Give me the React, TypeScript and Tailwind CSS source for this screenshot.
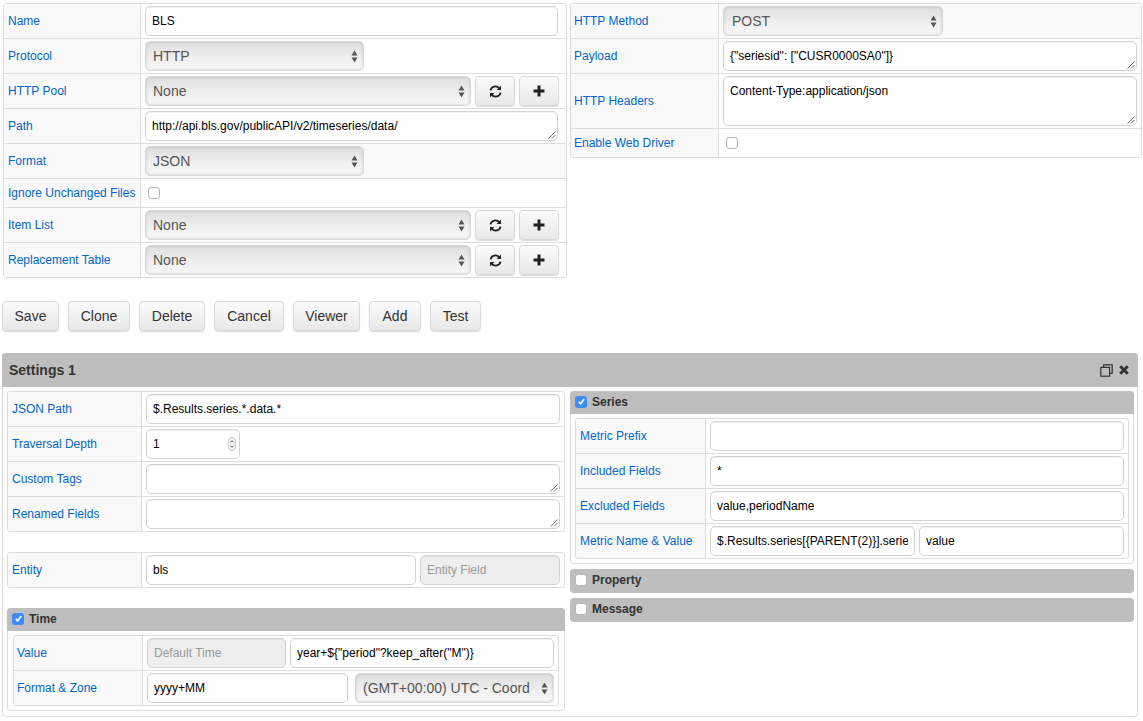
import type { ReactNode } from "react";

const inputCls =
  "h-[30px] min-w-0 rounded-[5px] border border-[#d2d2d2] bg-white px-[6px] text-[12px] text-black shadow-[inset_0_1px_1px_rgba(0,0,0,0.06)] flex items-center whitespace-nowrap";
const disabledCls =
  "h-[30px] min-w-0 rounded-[5px] border border-[#d2d2d2] bg-[#eeeeee] px-[6px] text-[12px] text-[#999999] shadow-[inset_0_1px_1px_rgba(0,0,0,0.06)] flex items-center whitespace-nowrap";
const btnCls =
  "rounded-[4px] border border-[#d8d8d8] bg-[linear-gradient(#fbfbfb,#e8e8e8)] shadow-[0_1px_1px_rgba(0,0,0,0.15)]";
const barCls = "flex items-center gap-[5px] bg-[#bebebe] pl-[5px] text-[12px] font-bold text-[#333333]";

function Grip() {
  return (
    <svg className="absolute bottom-[1px] right-[1px]" width="9" height="9" viewBox="0 0 9 9">
      <path d="M8.5 1.5L1.5 8.5M8.5 5L5 8.5" stroke="#777" strokeWidth="1" fill="none" />
    </svg>
  );
}

function Input({ children, className = "" }: { children?: ReactNode; className?: string }) {
  return (
    <div className={`${inputCls} ${className}`}>
      <span className="min-w-0 overflow-hidden">{children}</span>
    </div>
  );
}

function Area({ children, className = "" }: { children?: ReactNode; className?: string }) {
  return (
    <div className={`${inputCls} relative ${className}`}>
      {children}
      <Grip />
    </div>
  );
}

function Select({ value, className = "" }: { value: string; className?: string }) {
  return (
    <div
      className={`relative flex h-[30px] items-center rounded-[5px] border border-[#d8d8d8] bg-[linear-gradient(#dedede,#f0f0f0_60%,#f6f6f6)] pl-[7px] text-[14px] text-[#555555] shadow-[inset_0_0_3px_rgba(0,0,0,0.16)] whitespace-nowrap ${className}`}
    >
      {value}
      <svg className="absolute right-[5px] top-[8px]" width="7" height="13" viewBox="0 0 7 13">
        <path d="M3.5 0.5L6.5 5.5H0.5Z M3.5 12.5L0.5 7.5H6.5Z" fill="#555" />
      </svg>
    </div>
  );
}

function IconBtn({ children }: { children: ReactNode }) {
  return <div className={`flex h-[30px] w-[40px] shrink-0 items-center justify-center ${btnCls}`}>{children}</div>;
}

function Refresh() {
  return (
    <svg width="13" height="13" viewBox="0 0 13 13" fill="none" stroke="#222" strokeWidth="1.9">
      <path d="M1.5 5.4A5 5 0 0 1 10.3 3.3" />
      <path d="M11.5 7.6A5 5 0 0 1 2.7 9.7" />
      <path d="M12 0.6V5H7.6Z M1 12.4V8H5.4Z" fill="#222" stroke="none" />
    </svg>
  );
}

function Plus() {
  return (
    <svg width="12" height="12" viewBox="0 0 12 12">
      <path d="M4.5 0.5H7.5V4.5H11.5V7.5H7.5V11.5H4.5V7.5H0.5V4.5H4.5Z" fill="#222" />
    </svg>
  );
}

function PoolSelect({ value }: { value: string }) {
  return (
    <div className="flex w-full gap-[4px]">
      <Select value={value} className="flex-1" />
      <IconBtn>
        <Refresh />
      </IconBtn>
      <IconBtn>
        <Plus />
      </IconBtn>
    </div>
  );
}

function Row({
  label,
  children,
  labelW,
  h,
  last,
  tint,
  pl = "pl-[4px]",
  pr = "pr-[4px]",
}: {
  label: string;
  children?: ReactNode;
  labelW: string;
  h?: string;
  last?: boolean;
  tint?: boolean;
  pl?: string;
  pr?: string;
}) {
  const height = h ?? (last ? "h-[34px]" : "h-[35px]");
  return (
    <div className={`flex ${height} ${last ? "" : "border-b border-[#dddddd]"} ${tint ? "bg-[#f9f9f9]" : ""}`}>
      <div className={`flex ${labelW} shrink-0 items-center border-r border-[#dddddd] bg-[#f9f9f9] ${pl} text-[12px] text-[#0066cc]`}>
        {label}
      </div>
      <div className={`flex min-w-0 flex-1 items-center gap-[4px] pl-[4px] ${pr}`}>{children}</div>
    </div>
  );
}

function Check({ checked }: { checked?: boolean }) {
  if (checked) {
    return (
      <div className="flex h-[12px] w-[12px] shrink-0 items-center justify-center rounded-[3px] bg-[#3b8df5]">
        <svg width="9" height="9" viewBox="0 0 9 9" fill="none" stroke="#fff" strokeWidth="1.7">
          <path d="M1.8 4.8L3.7 6.8L7.2 2" />
        </svg>
      </div>
    );
  }
  return <div className="h-[12px] w-[12px] shrink-0 rounded-[3px] border border-[#b5b5b5] bg-white" />;
}

function Table({ children, className = "" }: { children: ReactNode; className?: string }) {
  return <div className={`overflow-hidden rounded-[3px] border border-[#dddddd] ${className}`}>{children}</div>;
}

function Section({ label, px, children }: { label: string; px: string; children: ReactNode }) {
  return (
    <div className="rounded-[4px] border-x border-b border-[#dddddd]">
      <div className={`-mx-px h-[23px] rounded-t-[4px] pb-[2px] ${barCls}`}>
        <Check checked />
        {label}
      </div>
      <div className={`py-[4px] ${px}`}>{children}</div>
    </div>
  );
}

function Bar({ label }: { label: string }) {
  return (
    <div className={`mt-[5px] h-[24px] rounded-[4px] pb-[2px] ${barCls}`}>
      <Check />
      {label}
    </div>
  );
}

const buttons: [string, string][] = [
  ["Save", "w-[57px]"],
  ["Clone", "w-[62px]"],
  ["Delete", "w-[66px]"],
  ["Cancel", "w-[70px]"],
  ["Viewer", "w-[67px]"],
  ["Add", "w-[52px]"],
  ["Test", "w-[51px]"],
];

export default function App() {
  return (
    <div className="h-[721px] w-[1143px] overflow-hidden bg-white font-['Liberation_Sans',Arial,sans-serif]">
      <div className="flex items-start gap-[3px] pl-[3px] pr-[1px] pt-[3px]">
        <Table className="w-[564px]">
          <Row label="Name" labelW="w-[137px]" pr="pr-[8px]">
            <Input className="w-full">BLS</Input>
          </Row>
          <Row label="Protocol" labelW="w-[137px]" pr="pr-[8px]">
            <Select value="HTTP" className="w-[219px]" />
          </Row>
          <Row label="HTTP Pool" labelW="w-[137px]" pr="pr-[7px]">
            <PoolSelect value="None" />
          </Row>
          <Row label="Path" labelW="w-[137px]" pr="pr-[8px]">
            <Area className="w-full">http://api.bls.gov/publicAPI/v2/timeseries/data/</Area>
          </Row>
          <Row label="Format" labelW="w-[137px]" pr="pr-[8px]" tint>
            <Select value="JSON" className="w-[219px]" />
          </Row>
          <Row label="Ignore Unchanged Files" labelW="w-[137px]" pr="pr-[8px]" h="h-[29px]">
            <div className="pl-[3px]">
              <Check />
            </div>
          </Row>
          <Row label="Item List" labelW="w-[137px]" pr="pr-[7px]">
            <PoolSelect value="None" />
          </Row>
          <Row label="Replacement Table" labelW="w-[137px]" pr="pr-[7px]" last>
            <PoolSelect value="None" />
          </Row>
        </Table>
        <Table className="flex-1">
          <Row label="HTTP Method" labelW="w-[148px]" pl="pl-[3px]" tint>
            <Select value="POST" className="w-[220px] !pl-[8px]" />
          </Row>
          <Row label="Payload" labelW="w-[148px]" pl="pl-[3px]">
            <Area className="w-full">{'{"seriesid": ["CUSR0000SA0"]}'}</Area>
          </Row>
          <Row label="HTTP Headers" labelW="w-[148px]" pl="pl-[3px]" h="h-[55px]">
            <Area className="h-[50px] w-full !items-start pt-[5px]">Content-Type:application/json</Area>
          </Row>
          <Row label="Enable Web Driver" labelW="w-[148px]" pl="pl-[3px]" h="h-[28px]" last>
            <div className="pl-[3px]">
              <Check />
            </div>
          </Row>
        </Table>
      </div>

      <div className="mt-[23px] flex gap-[9px] pl-[2px]">
        {buttons.map(([name, w]) => (
          <div key={name} className={`flex h-[30px] ${w} items-center justify-center text-[14px] text-[#333333] ${btnCls}`}>
            {name}
          </div>
        ))}
      </div>

      <div className="ml-[2px] mt-[22px] w-[1136px] rounded-[4px] border-x border-b border-[#dddddd]">
        <div className="-mx-px flex h-[34px] items-center justify-between rounded-t-[4px] bg-[#bebebe] pl-[7px] pr-[9px] text-[14px] font-bold text-[#333333]">
          Settings 1
          <div className="flex items-center gap-[6px]">
            <svg width="13" height="13" viewBox="0 0 13 13" fill="none" stroke="#333" strokeWidth="1.2">
              <path d="M3.6 3V0.8H12.2V9.4H9.8" />
              <rect x="0.8" y="3.4" width="8.8" height="8.8" />
            </svg>
            <svg width="10" height="10" viewBox="0 0 10 10" stroke="#333" strokeWidth="3">
              <path d="M1.2 1.2L8.8 8.8M8.8 1.2L1.2 8.8" />
            </svg>
          </div>
        </div>
        <div className="flex h-[329px] gap-[5px] pl-[4px] pr-[3px] pt-[4px]">
          <div className="w-[558px] shrink-0">
            <Table>
              <Row label="JSON Path" labelW="w-[134px]">
                <Input className="w-full">$.Results.series.*.data.*</Input>
              </Row>
              <Row label="Traversal Depth" labelW="w-[134px]">
                <Input className="relative w-[94px]">
                  1
                  <svg className="absolute right-[3px] top-[7px]" width="8" height="14" viewBox="0 0 8 14" fill="none" stroke="#666">
                    <rect x="0.5" y="0.5" width="7" height="13" rx="3.5" fill="#f4f4f4" stroke="#ccc" />
                    <path d="M2.4 5.4L4 3.6L5.6 5.4M2.4 8.6L4 10.4L5.6 8.6" />
                  </svg>
                </Input>
              </Row>
              <Row label="Custom Tags" labelW="w-[134px]">
                <Area className="w-full" />
              </Row>
              <Row label="Renamed Fields" labelW="w-[134px]" last>
                <Area className="w-full" />
              </Row>
            </Table>
            <Table className="mt-[20px]">
              <Row label="Entity" labelW="w-[134px]" last>
                <Input className="w-[270px]">bls</Input>
                <div className={`${disabledCls} flex-1`}>Entity Field</div>
              </Row>
            </Table>
            <div className="mt-[20px]">
              <Section label="Time" px="px-[5px]">
                <Table>
                  <Row label="Value" labelW="w-[129px]" pl="pl-[3px]">
                    <div className={`${disabledCls} w-[139px] shrink-0`}>Default Time</div>
                    <Input className="flex-1">{'year+${"period"?keep_after("M")}'}</Input>
                  </Row>
                  <Row label="Format & Zone" labelW="w-[129px]" pl="pl-[3px]" last>
                    <Input className="w-[201px] shrink-0">yyyy+MM</Input>
                    <Select value="(GMT+00:00) UTC - Coord" className="ml-[3px] flex-1 overflow-hidden" />
                  </Row>
                </Table>
              </Section>
            </div>
          </div>
          <div className="min-w-0 flex-1">
            <Section label="Series" px="px-[4px]">
              <Table>
                <Row label="Metric Prefix" labelW="w-[130px]">
                  <Input className="w-full" />
                </Row>
                <Row label="Included Fields" labelW="w-[130px]">
                  <Input className="w-full">*</Input>
                </Row>
                <Row label="Excluded Fields" labelW="w-[130px]">
                  <Input className="w-full">value,periodName</Input>
                </Row>
                <Row label="Metric Name & Value" labelW="w-[130px]" last>
                  <Input className="w-[205px] shrink-0">{"$.Results.series[{PARENT(2)}].series"}</Input>
                  <Input className="flex-1">value</Input>
                </Row>
              </Table>
            </Section>
            <Bar label="Property" />
            <Bar label="Message" />
          </div>
        </div>
      </div>
    </div>
  );
}
